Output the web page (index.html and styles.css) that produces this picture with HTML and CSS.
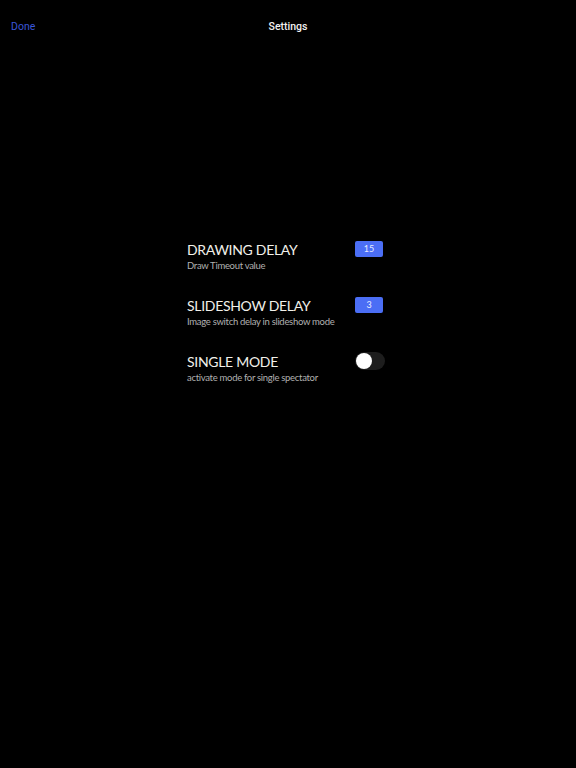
FILE: index.html
```html
<!DOCTYPE html>
<html>
<head>
<meta charset="utf-8">
<link rel="stylesheet" href="styles.css">
</head>
<body>
<header class="nav">
  <span class="nav-done">Done</span>
  <span class="nav-title">Settings</span>
  <span class="nav-spacer"></span>
</header>
<main class="main">
  <div class="list">
    <div class="row">
      <div class="row-head">
        <span class="row-title">DRAWING DELAY</span>
        <span class="badge">15</span>
      </div>
      <div class="row-sub">Draw Timeout value</div>
    </div>
    <div class="row">
      <div class="row-head">
        <span class="row-title">SLIDESHOW DELAY</span>
        <span class="badge">3</span>
      </div>
      <div class="row-sub">Image switch delay in slideshow mode</div>
    </div>
    <div class="row">
      <div class="row-head">
        <span class="row-title">SINGLE MODE</span>
        <span class="toggle"><span class="knob"></span></span>
      </div>
      <div class="row-sub">activate mode for single spectator</div>
    </div>
  </div>
</main>
</body>
</html>
```
FILE: styles.css
```css
html, body {
  margin: 0;
  padding: 0;
  background: #000;
}
body {
  width: 576px;
  height: 768px;
  overflow: hidden;
  font-family: "Lato", "Open Sans", sans-serif;
  color: #fff;
}
.nav {
  height: 50px;
  padding: 2px 11px 0;
  box-sizing: border-box;
  display: grid;
  grid-template-columns: 1fr auto 1fr;
  align-items: center;
  font-family: "Roboto", "DejaVu Sans", sans-serif;
  font-size: 10.5px;
}
.nav-done {
  color: #3a56d8;
}
.nav-title {
  color: #f2f2f2;
  font-weight: 500;
}
.main {
  padding: 189px 0 0 187px;
}
.list {
  width: 198px;
  display: flex;
  flex-direction: column;
  gap: 22px;
}
.row-head {
  height: 20px;
  display: flex;
  align-items: center;
  justify-content: space-between;
}
.row-title {
  font-size: 14px;
  font-weight: 400;
  color: #f1f0ea;
  letter-spacing: -0.3px;
}
.row-sub {
  height: 14px;
  line-height: 14px;
  font-size: 9.5px;
  letter-spacing: -0.3px;
  color: #b0b0b0;
  font-weight: 400;
}
.badge {
  width: 28px;
  height: 16px;
  margin-right: 2px;
  margin-top: -1px;
  border-radius: 2px;
  background: #4b6ef5;
  color: #e8ecff;
  font-size: 9px;
  display: flex;
  align-items: center;
  justify-content: center;
}
.toggle {
  position: relative;
  width: 30px;
  height: 18px;
  border-radius: 9px;
  background: #1d1d1d;
}
.knob {
  position: absolute;
  left: 1px;
  top: 1px;
  width: 16px;
  height: 16px;
  border-radius: 50%;
  background: #fff;
}
```
